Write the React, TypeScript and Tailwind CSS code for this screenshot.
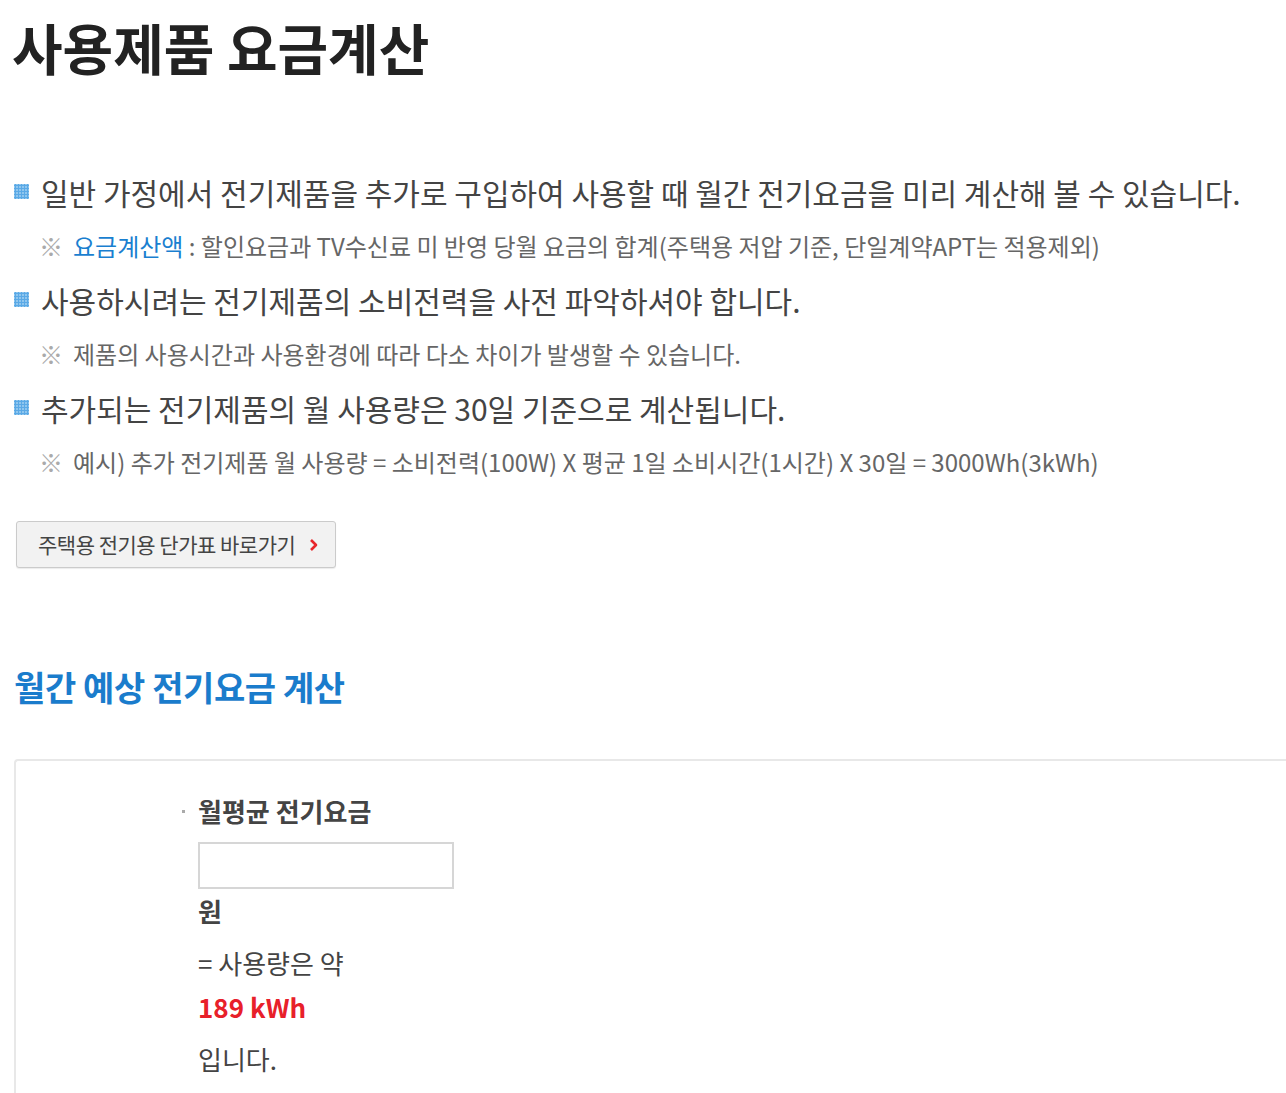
import React from 'react';

const font = { fontFamily: '"Noto Sans CJK KR", "Noto Sans", sans-serif' };

const Bullet: React.FC = () => (
  <span className="mt-[12px] inline-block h-[15px] w-[15px] shrink-0 bg-[#8fc6ee] bg-[radial-gradient(circle,#5aa9e6_1px,transparent_1.2px)] bg-[length:3px_3px]" />
);

const Note: React.FC<{ children: React.ReactNode }> = ({ children }) => (
  <p className="mt-[17px] flex items-center pl-[39px] text-[24px] leading-[34px] text-[#666]">
    <span className="mr-[10px] text-[24px] text-[#aaa]">※</span>
    <span>{children}</span>
  </p>
);

const Item: React.FC<{ title: string; note: React.ReactNode }> = ({ title, note }) => (
  <li className="mb-[17px]">
    <div className="flex gap-[12px] pl-[14px] text-[30px] leading-[40px] text-[#444]">
      <Bullet />
      <span>{title}</span>
    </div>
    <Note>{note}</Note>
  </li>
);

export default function App() {
  return (
    <div className="h-[1093px] overflow-hidden bg-white" style={font}>
      <h1 className="pl-[12px] pt-[11px] text-[55px] font-bold leading-[70px] text-[#222]">
        사용제품 요금계산
      </h1>

      <ul className="mt-[91px]">
        <Item
          title="일반 가정에서 전기제품을 추가로 구입하여 사용할 때 월간 전기요금을 미리 계산해 볼 수 있습니다."
          note={
            <>
              <span className="text-[#1a7fd0]">요금계산액</span> : 할인요금과 TV수신료 미 반영 당월 요금의 합계(주택용 저압 기준, 단일계약APT는 적용제외)
            </>
          }
        />
        <Item
          title="사용하시려는 전기제품의 소비전력을 사전 파악하셔야 합니다."
          note="제품의 사용시간과 사용환경에 따라 다소 차이가 발생할 수 있습니다."
        />
        <Item
          title="추가되는 전기제품의 월 사용량은 30일 기준으로 계산됩니다."
          note="예시) 추가 전기제품 월 사용량 = 소비전력(100W) X 평균 1일 소비시간(1시간) X 30일 = 3000Wh(3kWh)"
        />
      </ul>

      <div className="pl-[16px] pt-[25px]">
        <button className="flex h-[47px] w-[320px] items-center gap-[14px] rounded-[3px] border border-[#cbcbcb] bg-[#f2f2f2] pl-[21px] text-[21px] tracking-[-0.5px] text-[#444] shadow-[0_1px_1px_rgba(0,0,0,0.08)]">
          주택용 전기용 단가표 바로가기
          <svg width="9" height="14" viewBox="0 0 9 14" className="mt-[1px]">
            <path d="M2 2 L7 7 L2 12" fill="none" stroke="#e8262b" strokeWidth="2.6" strokeLinejoin="round" />
          </svg>
        </button>
      </div>

      <h2 className="mt-[97px] pl-[14px] text-[34px] font-bold leading-[44px] tracking-[-0.4px] text-[#1a7ccc]">
        월간 예상 전기요금 계산
      </h2>

      <div className="ml-[14px] mt-[50px] min-h-[400px] w-[1290px] rounded-tl-[4px] border-l-2 border-t-2 border-[#e8e8e8] pl-[166px] pt-[33px]">
        <div className="flex items-center">
          <span className="mr-[13px] h-[3px] w-[3px] bg-[#aaa]" />
          <span className="text-[26px] font-bold leading-[34px] text-[#444]">월평균 전기요금</span>
        </div>
        <div className="pl-[16px]">
          <input className="mt-[14px] block h-[47px] w-[256px] border-2 border-[#d6d6d6] bg-white outline-none" />
          <p className="mt-[5px] text-[26px] font-bold leading-[34px] text-[#444]">원</p>
          <p className="mt-[18px] text-[26px] leading-[34px] text-[#444]">= 사용량은 약</p>
          <p className="mt-[10px] text-[26px] font-bold leading-[34px] text-[#e8202a]">189 kWh</p>
          <p className="mt-[18px] text-[26px] leading-[34px] text-[#444]">입니다.</p>
        </div>
      </div>
    </div>
  );
}
